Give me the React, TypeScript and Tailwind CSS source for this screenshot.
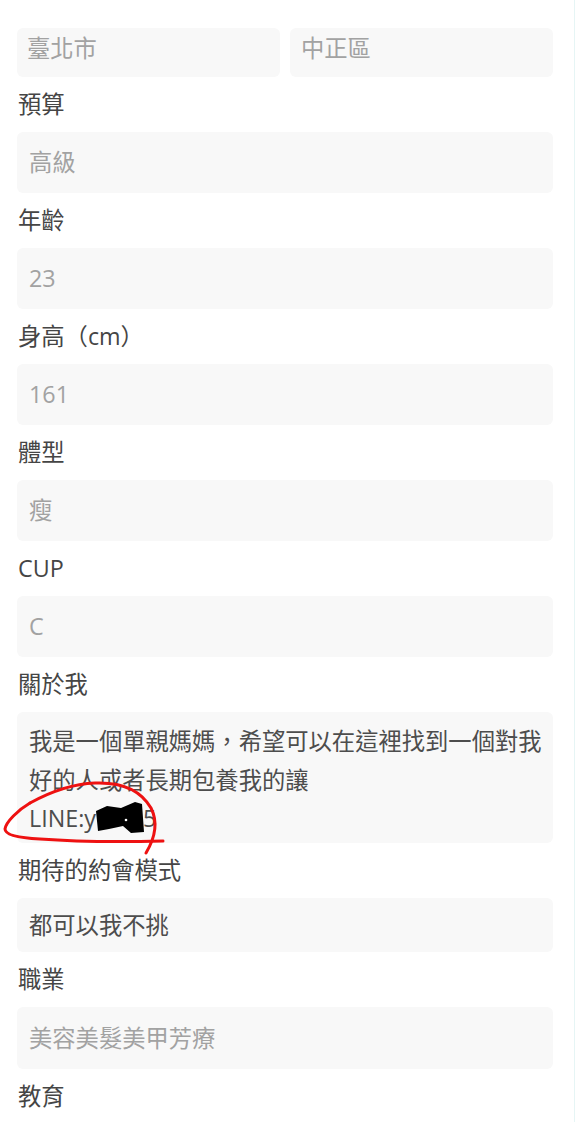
import React from "react";

const font = "font-['Open_Sans','Noto_Sans_CJK_TC',sans-serif]";

function Label({ children }: { children: React.ReactNode }) {
  return (
    <div className="h-[55px] flex items-center pl-[1px] text-[23.3px] leading-[27px] text-[#454545]">
      {children}
    </div>
  );
}

function Field({ value, dark = false, h = "h-[61px]" }: { value: string; dark?: boolean; h?: string }) {
  return (
    <div
      className={`${h} flex items-center rounded-md bg-[#f8f8f8] px-3 text-[23.3px] leading-[27px] ${
        dark ? "text-[#4d4d4d]" : "text-[#a2a2a2]"
      }`}
    >
      {value}
    </div>
  );
}

export default function App() {
  return (
    <div className={`relative w-[575px] h-[1122px] overflow-hidden bg-white border-r border-[#e6f5f5] ${font}`}>
      <div className="pt-[28px] pl-[17px] pr-[21px]">
        <div className="grid grid-cols-2 gap-[10px]">
          <div className="h-[49px] flex items-center pb-[8px] rounded-md bg-[#f8f8f8] px-[10px] text-[23.3px] leading-[27px] text-[#a2a2a2]">
            臺北市
          </div>
          <div className="h-[49px] flex items-center pb-[8px] rounded-md bg-[#f8f8f8] px-[11px] text-[23.3px] leading-[27px] text-[#a2a2a2]">
            中正區
          </div>
        </div>
        <Label>預算</Label>
        <Field value="高級" />
        <Label>年齡</Label>
        <Field value="23" />
        <Label>身高（cm）</Label>
        <Field value="161" />
        <Label>體型</Label>
        <Field value="瘦" />
        <Label>CUP</Label>
        <Field value="C" />
        <Label>關於我</Label>
        <div className="h-[131px] rounded-md bg-[#f8f8f8] px-3 pt-[10px] pb-[7px] text-[23.3px] leading-[38.5px] text-[#4d4d4d] whitespace-nowrap">
          我是一個單親媽媽，希望可以在這裡找到一個對我
          <br />
          好的人或者長期包養我的讓
          <br />
          <span className="inline-flex items-center">
            LINE:y
            <svg width="50" height="34" viewBox="0 0 50 34" className="-ml-[1px]">
              <path
                d="M1 10 L12 5 L26 7 L40 1 L47 3 L49 31 L36 32 L28 25 L14 28 L3 30 Z"
                fill="#000"
              />
              <circle cx="31" cy="19" r="1.3" fill="#fff" />
            </svg>
            <span className="-ml-[2px]">5</span>
          </span>
        </div>
        <Label>期待的約會模式</Label>
        <Field value="都可以我不挑" dark h="h-[54px]" />
        <Label>職業</Label>
        <Field value="美容美髮美甲芳療" h="h-[62px]" />
        <Label>教育</Label>
      </div>

      <svg
        className="absolute left-0 top-0 pointer-events-none"
        width="575"
        height="1122"
        viewBox="0 0 575 1122"
        fill="none"
      >
        <path
          d="M30 803 C 50 792, 70 784, 95 783 C 120 782, 140 789, 151 808 C 158 822, 155 838, 146 853"
          stroke="#ee1111"
          strokeWidth="3"
          strokeLinecap="round"
        />
        <path
          d="M30 803 C 18 810, 6 822, 5 829 C 5 835, 20 838, 40 839 C 80 842, 120 842, 163 841"
          stroke="#ee1111"
          strokeWidth="3"
          strokeLinecap="round"
        />
      </svg>
    </div>
  );
}
